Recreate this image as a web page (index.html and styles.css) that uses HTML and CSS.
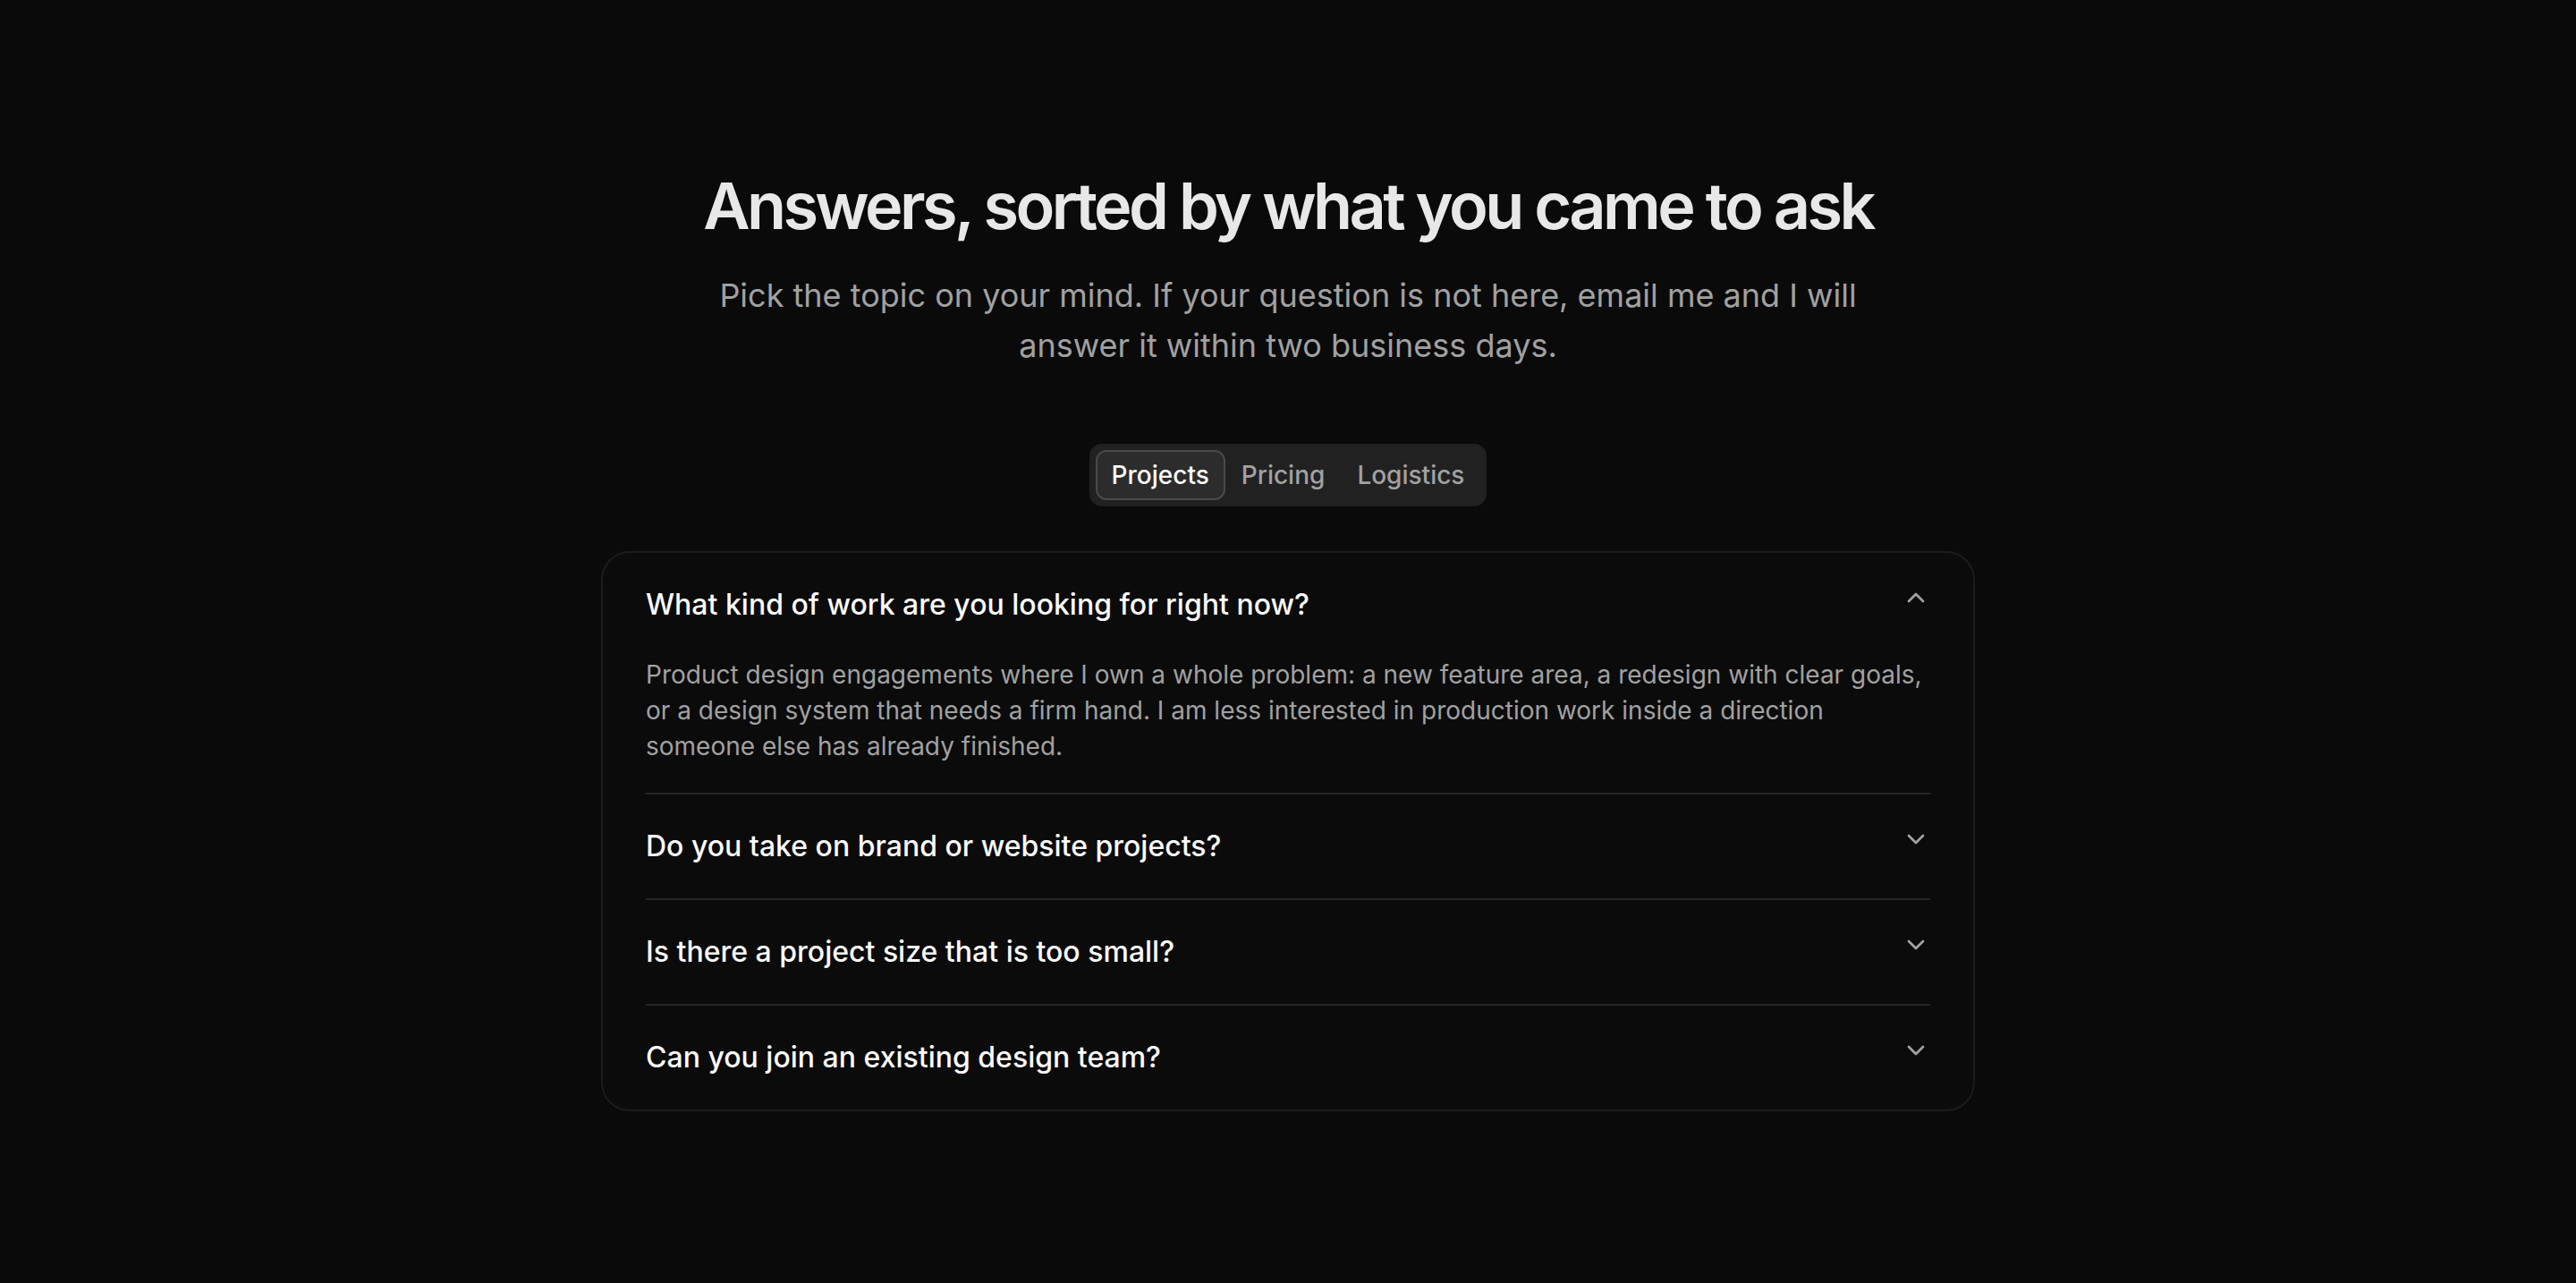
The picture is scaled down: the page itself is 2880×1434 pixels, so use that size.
FILE: index.html
```html
<!DOCTYPE html>
<html lang="en">
<head>
<meta charset="utf-8">
<title>FAQ</title>
<link rel="stylesheet" href="styles.css">
</head>
<body>
<main class="page">
  <h1 class="title">Answers, sorted by what you came to ask</h1>
  <p class="lead">Pick the topic on your mind. If your question is not here, email me and I will answer it within two business days.</p>

  <div class="tabs" role="tablist">
    <button class="tab active" role="tab">Projects</button>
    <button class="tab" role="tab">Pricing</button>
    <button class="tab" role="tab">Logistics</button>
  </div>

  <section class="card">
    <div class="item open">
      <button class="q">
        <span>What kind of work are you looking for right now?</span>
        <svg class="icon" viewBox="0 0 24 24" fill="none" stroke="currentColor" stroke-width="2" stroke-linecap="round" stroke-linejoin="round"><path d="m18 15-6-6-6 6"/></svg>
      </button>
      <p class="a">Product design engagements where I own a whole problem: a new feature area, a redesign with clear goals, or a design system that needs a firm hand. I am less interested in production work inside a direction someone else has already finished.</p>
    </div>
    <div class="item">
      <button class="q">
        <span>Do you take on brand or website projects?</span>
        <svg class="icon" viewBox="0 0 24 24" fill="none" stroke="currentColor" stroke-width="2" stroke-linecap="round" stroke-linejoin="round"><path d="m6 9 6 6 6-6"/></svg>
      </button>
    </div>
    <div class="item">
      <button class="q">
        <span>Is there a project size that is too small?</span>
        <svg class="icon" viewBox="0 0 24 24" fill="none" stroke="currentColor" stroke-width="2" stroke-linecap="round" stroke-linejoin="round"><path d="m6 9 6 6 6-6"/></svg>
      </button>
    </div>
    <div class="item">
      <button class="q">
        <span>Can you join an existing design team?</span>
        <svg class="icon" viewBox="0 0 24 24" fill="none" stroke="currentColor" stroke-width="2" stroke-linecap="round" stroke-linejoin="round"><path d="m6 9 6 6 6-6"/></svg>
      </button>
    </div>
  </section>
</main>
</body>
</html>
```
FILE: styles.css
```css
* { box-sizing: border-box; }

html, body {
  margin: 0;
  background: #0a0a0a;
}

body {
  font-family: Inter, "Noto Sans", "Liberation Sans", sans-serif;
  color: #fafafa;
}

.page {
  display: flex;
  flex-direction: column;
  align-items: center;
  padding: 190px 48px 0;
}

.title {
  margin: 0;
  font-size: 72px;
  line-height: 80px;
  font-weight: 600;
  letter-spacing: -0.05em;
  color: #e8e8e8;
  text-align: center;
}

.lead {
  margin: 32px 0 0;
  max-width: 1320px;
  font-size: 36px;
  line-height: 56px;
  color: #a1a1a1;
  text-align: center;
}

.tabs {
  margin-top: 82px;
  display: flex;
  padding: 5px;
  border: 2px solid #202020;
  border-radius: 14px;
  background: #212121;
}

.tab {
  padding: 10px 16px;
  border: 2px solid transparent;
  border-radius: 12px;
  background: transparent;
  font-family: inherit;
  font-size: 28px;
  line-height: 32px;
  font-weight: 500;
  color: #a1a1a1;
  cursor: pointer;
}

.tab.active {
  background: #2c2c2c;
  border-color: #4a4a4a;
  color: #fafafa;
}

.card {
  margin-top: 50px;
  width: 1536px;
  padding: 0 48px;
  border: 2px solid #1c1c1c;
  border-radius: 32px;
  background: #0b0b0b;
}

.item + .item {
  border-top: 2px solid #262626;
}

.q {
  display: flex;
  align-items: flex-start;
  justify-content: space-between;
  gap: 32px;
  width: 100%;
  padding: 34px 0;
  border: 0;
  background: transparent;
  font-family: inherit;
  font-size: 32px;
  line-height: 48px;
  font-weight: 500;
  color: #fafafa;
  text-align: left;
  cursor: pointer;
}

.icon {
  flex: none;
  width: 32px;
  height: 32px;
  color: #a3a3a3;
}

.a {
  margin: 0;
  padding-bottom: 32px;
  font-size: 28px;
  line-height: 40px;
  color: #a1a1a1;
}
```
